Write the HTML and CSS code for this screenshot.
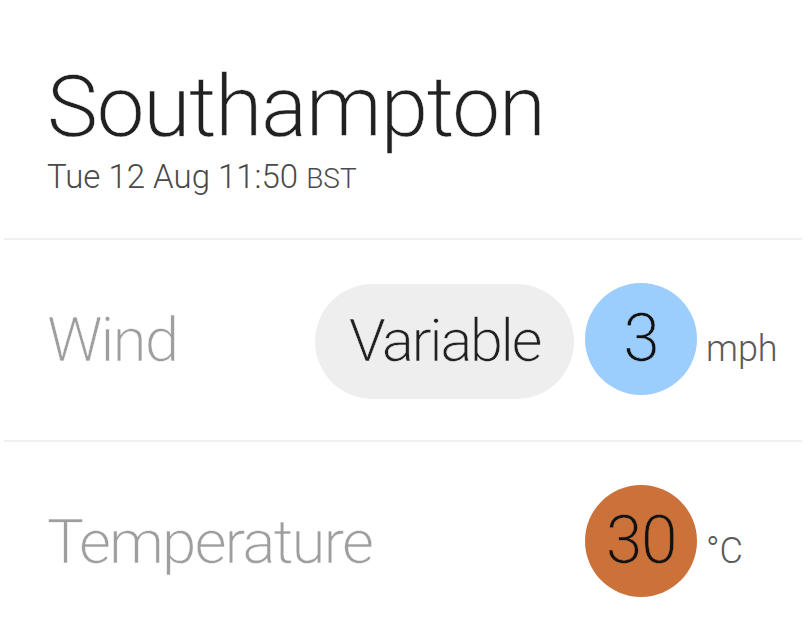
FILE: index.html
```html
<!DOCTYPE html>
<html>
<head lang="en">
    <meta charset="UTF-8">
    <title>Southampton weather</title>
    <link rel="stylesheet" href="styles.css">
</head>
<body>
<div class="card">
    <div class="head">
        <h1 class="city">Southampton</h1>
        <div class="time">Tue 12 Aug 11:50 <span class="zone">BST</span></div>
    </div>
    <div class="row">
        <div class="label">Wind</div>
        <div class="pill">Variable</div>
        <div class="dot wind">3</div>
        <div class="unit">mph</div>
    </div>
    <div class="row last">
        <div class="label">Temperature</div>
        <div class="dot temp">30</div>
        <div class="unit">&deg;C</div>
    </div>
</div>
</body>
</html>
```

FILE: styles.css
```css
* {
    margin: 0;
    padding: 0;
    box-sizing: border-box;
}

body {
    background: #fff;
    font-family: "Roboto Light", Roboto, "Liberation Sans", sans-serif;
    font-weight: 300;
    /* no light face installed: thin the regular one with a stroke in the background colour */
    -webkit-text-stroke: 0.03em #fff;
}

.card {
    margin: 0 7px 0 4px;
}

.head {
    padding: 64px 0 45px 43px;
    border-bottom: 2px solid #f0f0f0;
}
.city {
    font-size: 86px;
    font-weight: 300;
    line-height: 1;
    letter-spacing: -0.017em;
    color: #212121;
}
.time {
    margin-top: 10px;
    font-size: 33px;
    line-height: 1;
    color: #4a4a4a;
    -webkit-text-stroke-width: 0;
}
.time .zone {
    font-size: 28px;
}

.row {
    display: flex;
    align-items: baseline;
    padding: 43px 0 41px 43px;
    border-bottom: 2px solid #f0f0f0;
}
.row.last {
    border-bottom: none;
}
.label {
    flex: 1;
    font-size: 62px;
    line-height: 1;
    letter-spacing: -0.032em;
    color: #9e9e9e;
}
.pill {
    display: flex;
    align-items: center;
    height: 115px;
    padding: 0 34px;
    margin-right: 11px;
    border-radius: 58px;
    background-color: #eeeeee;
    font-size: 60px;
    line-height: 1;
    letter-spacing: -0.042em;
    color: #212121;
    -webkit-text-stroke-color: #eeeeee;
}
.dot {
    display: flex;
    align-items: center;
    justify-content: center;
    width: 112px;
    height: 112px;
    border-radius: 50%;
    font-size: 66px;
    line-height: 1;
    letter-spacing: -0.02em;
    color: #111;
}
.dot.wind {
    background-color: #9bcdfd;
    -webkit-text-stroke-color: #9bcdfd;
}
.dot.temp {
    background-color: #cb713a;
    -webkit-text-stroke-color: #cb713a;
}
.unit {
    flex: 0 0 105px;
    padding-left: 9px;
    font-size: 36px;
    line-height: 1;
    color: #5a5a5a;
    -webkit-text-stroke-width: 0;
}
```
